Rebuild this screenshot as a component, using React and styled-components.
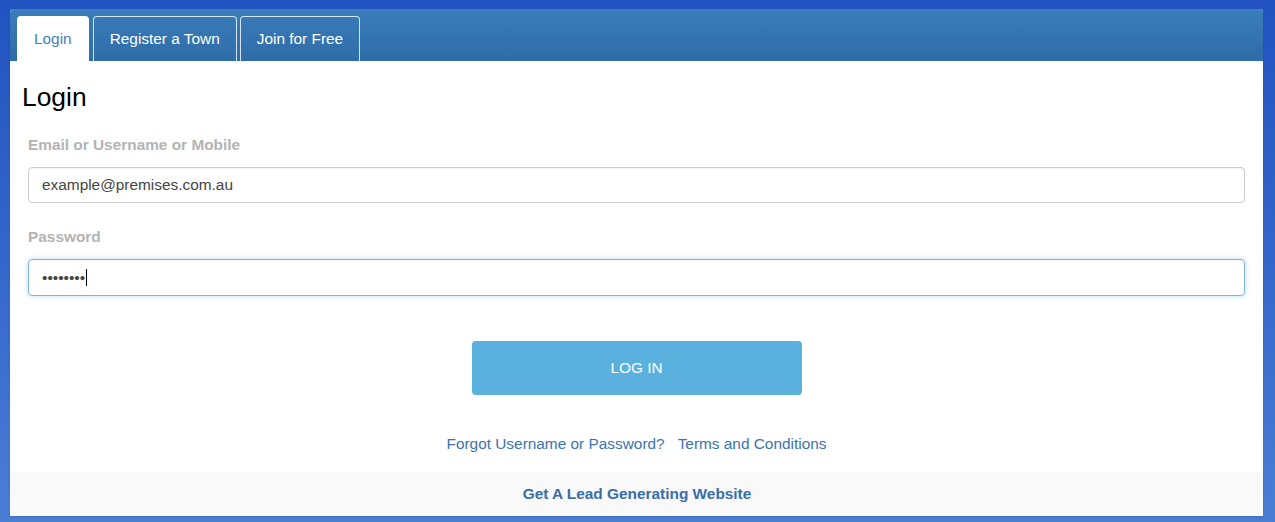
import styled, { createGlobalStyle, css } from 'styled-components';

const Global = createGlobalStyle`
    * { box-sizing: border-box; }
    html, body {
        margin: 0;
        height: 100%;
    }
    body {
        font-family: 'Liberation Sans', Arial, sans-serif;
        background: linear-gradient(180deg, #2253c0 0%, #3467cb 50%, #4a7ed5 100%);
        min-height: 522px;
    }
`;

export default function App() {
    const tabs = ['Login', 'Register a Town', 'Join for Free'];
    return (
        <Page>
            <Global />
            <Panel>
                <TabBar>
                    {tabs.map((t, i) => (
                        <Tab key={t} active={i === 0}>{t}</Tab>
                    ))}
                </TabBar>
                <Content>
                    <Title>Login</Title>
                    <Form>
                        <Label>Email or Username or Mobile</Label>
                        <Input defaultValue='example@premises.com.au' readOnly />
                        <Label>Password</Label>
                        <PasswordBox>
                            <Dots>••••••••</Dots>
                            <Caret />
                        </PasswordBox>
                        <BtnRow>
                            <Btn>LOG IN</Btn>
                        </BtnRow>
                        <Links>
                            <Link>Forgot Username or Password?</Link>
                            <Link>Terms and Conditions</Link>
                        </Links>
                    </Form>
                </Content>
                <Footer>
                    <FooterLink>Get A Lead Generating Website</FooterLink>
                </Footer>
            </Panel>
        </Page>
    );
}

const Page = styled.div`
    padding: 9px 12px 6px 10px;
`;

const Panel = styled.div`
    background-color: #FFF;
    border-radius: 4px 4px 0 0;
    overflow: hidden;
    box-shadow: 0 1px 2px rgba(0, 0, 0, 0.15);
`;

const TabBar = styled.div`
    display: flex;
    gap: 3px;
    padding: 7px 7px 0;
    height: 52px;
    background: linear-gradient(180deg, #3a7dbb 0%, #2e6ca7 100%);
`;

const Tab = styled.div`
    height: 45px;
    padding: 0 16px;
    margin-right: ${p => p.active ? 1 : 0}px;
    display: flex;
    align-items: center;
    font-size: 15.4px;
    border-radius: 4px 4px 0 0;
    color: ${p => p.active ? '#3f7ec0' : '#FFF'};
    background-color: ${p => p.active ? '#FFF' : 'transparent'};
    border: 1px solid ${p => p.active ? '#FFF' : 'rgba(255, 255, 255, 0.8)'};
    border-bottom: none;
`;

const Content = styled.div`
    padding: 20px 18px 19px 12px;
`;

const Title = styled.h1`
    margin: 0 0 22px;
    font-weight: 400;
    font-size: 26.4px;
    line-height: 32px;
    color: #000;
`;

const Form = styled.div`
    padding-left: 6px;
    display: flex;
    flex-direction: column;
`;

const Label = styled.div`
    font-size: 15.4px;
    font-weight: bold;
    line-height: 20px;
    color: #b3b3b3;
    margin-bottom: 12px;
`;

const field = css`
    width: 100%;
    border-radius: 4px;
    padding: 0 13px;
    font-family: 'Liberation Sans', Arial, sans-serif;
    font-size: 15.4px;
    color: #444;
    outline: none;
`;

const Input = styled.input`
    ${field}
    height: 36px;
    border: 1px solid #cccccc;
    margin-bottom: 24px;
    box-shadow: inset 0 1px 1px rgba(0, 0, 0, .05);
`;

const PasswordBox = styled.div`
    ${field}
    height: 37px;
    border: 1px solid #7fb4e6;
    display: flex;
    align-items: center;
    box-shadow: inset 0 1px 1px rgba(0, 0, 0, .05), 0 0 5px rgba(102, 175, 233, .45);
`;

const Dots = styled.span`
    font-size: 15.4px;
    color: #444;
`;

const Caret = styled.span`
    width: 1px;
    height: 17px;
    background-color: #000;
    margin-left: 1px;
`;

const BtnRow = styled.div`
    display: flex;
    justify-content: center;
    margin-top: 45px;
`;

const Btn = styled.button`
    width: 330px;
    height: 54px;
    border: none;
    border-radius: 4px;
    background-color: #5bb1de;
    color: #FFF;
    font-family: 'Liberation Sans', Arial, sans-serif;
    font-size: 15.4px;
`;

const Links = styled.div`
    display: flex;
    justify-content: center;
    gap: 13px;
    margin-top: 40px;
    line-height: 18px;
`;

const Link = styled.a`
    font-size: 15.4px;
    color: #3d73ad;
    cursor: pointer;
`;

const Footer = styled.div`
    height: 44px;
    background-color: #f9f9f9;
    display: flex;
    align-items: center;
    justify-content: center;
`;

const FooterLink = styled.a`
    font-size: 15.4px;
    font-weight: bold;
    color: #3a6ea8;
    padding-left: 1px;
`;
